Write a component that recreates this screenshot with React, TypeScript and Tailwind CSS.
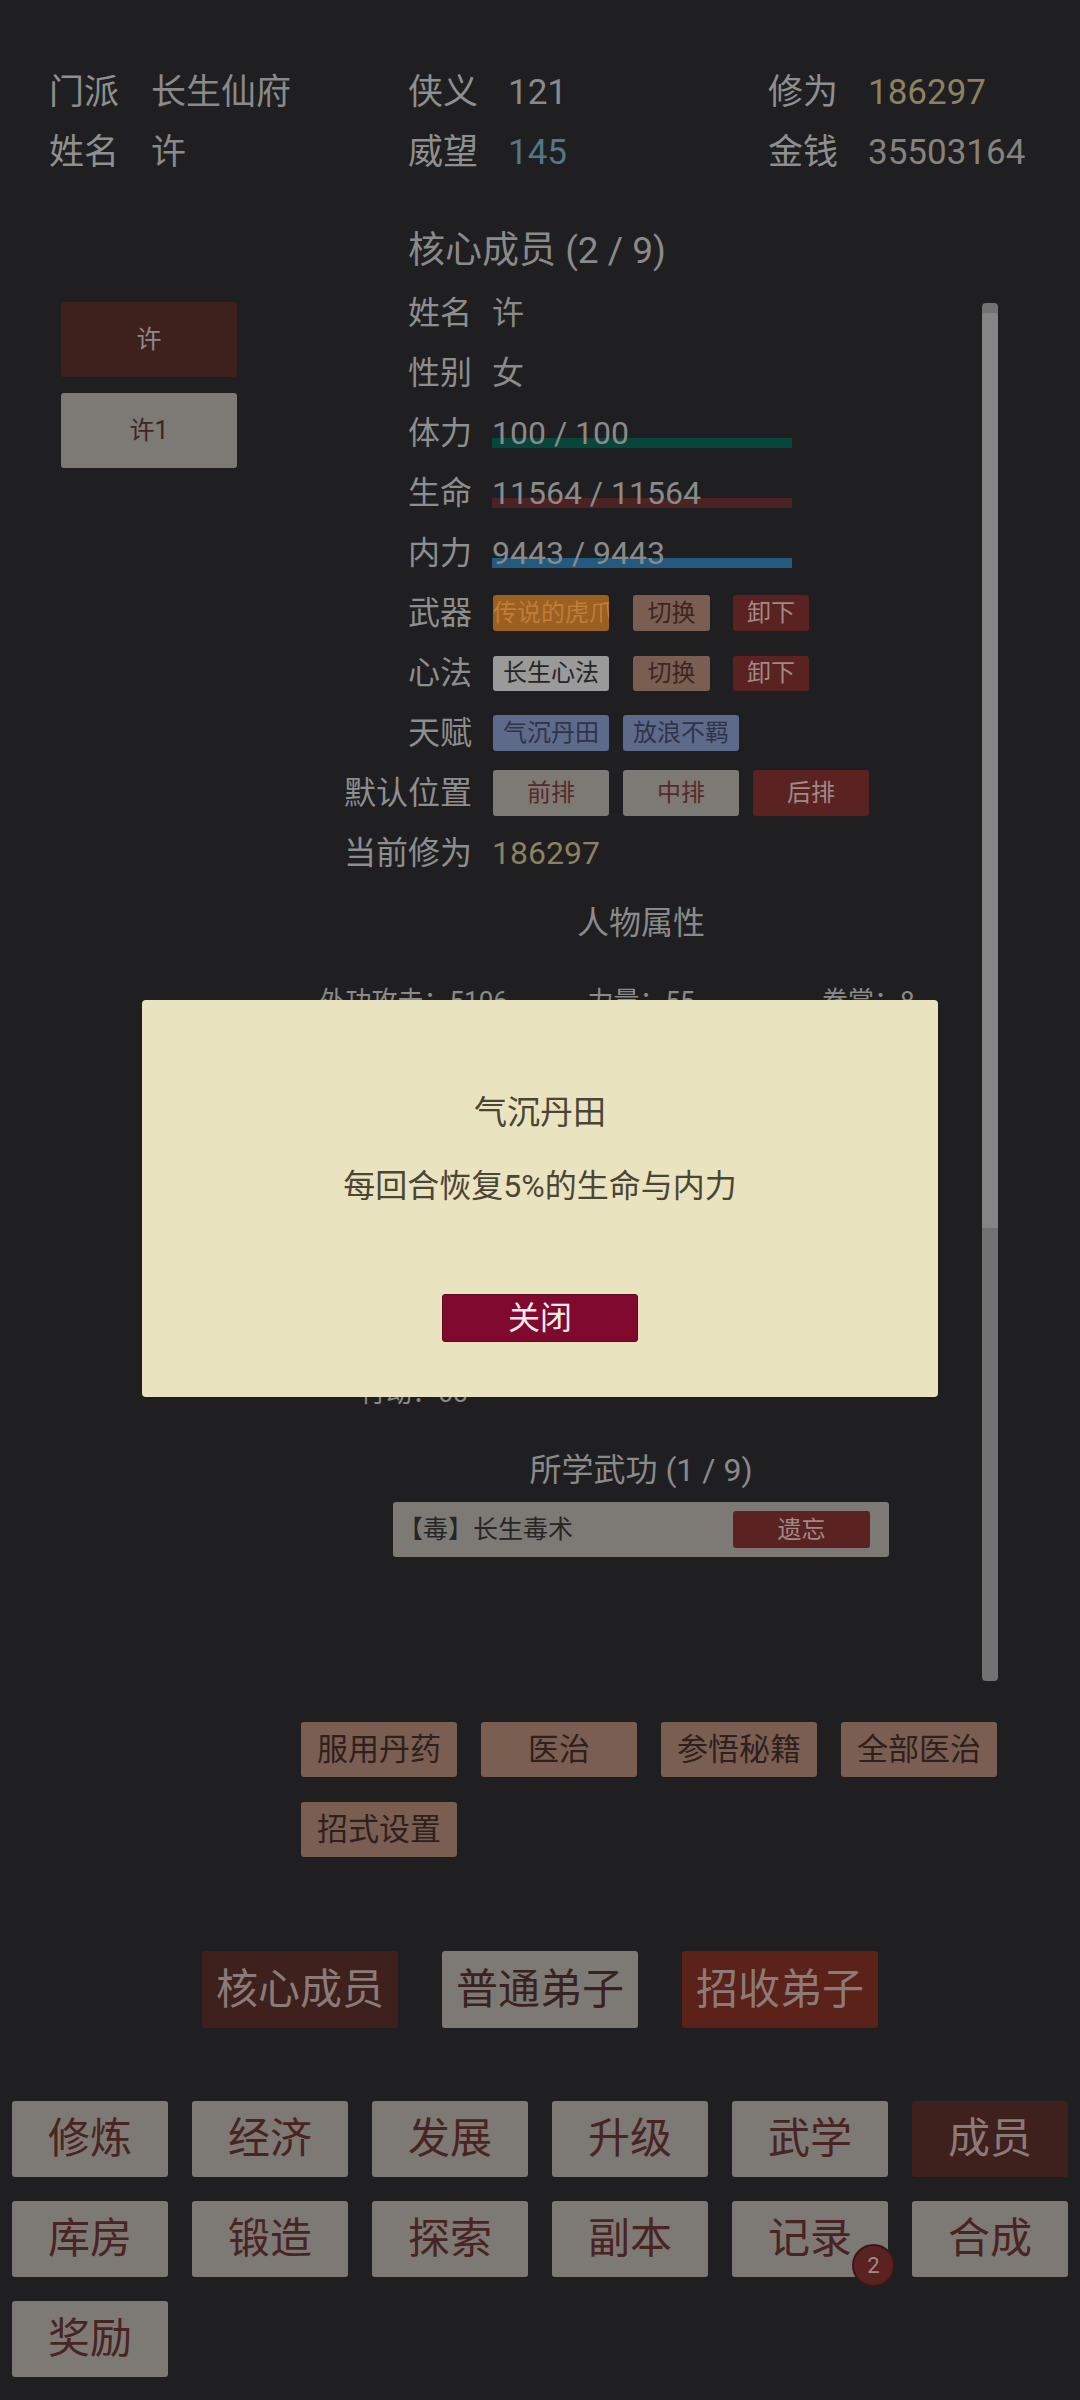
import React from "react";

const stats = [
  "外功攻击：5106", "力量：55", "拳掌：8",
  "内功攻击：4820", "根骨：62", "剑法：0",
  "外功防御：3210", "身法：48", "刀法：0",
  "内功防御：2987", "悟性：71", "棍法：0",
  "命中：120", "福缘：33", "暗器：0",
  "闪避：86", "医术：12", "毒术：45",
  "暴击：15", "御毒：30", "奇门：0",
  "暴伤：150", "格挡：20", "反击：10",
  "行动：65",
];

const navItems = ["修炼", "经济", "发展", "升级", "武学", "成员", "库房", "锻造", "探索", "副本", "记录", "合成", "奖励"];

// one line of the member detail panel
function Row({ label, children }: { label: string; children: React.ReactNode }) {
  return (
    <div className="flex h-[60px] items-center">
      <div className="w-[172px] text-right text-[32px] text-[#8e8e8e]">{label}</div>
      <div className="ml-[20px] flex items-center">{children}</div>
    </div>
  );
}

function Bar({ text, color }: { text: string; color: string }) {
  return (
    <div className="relative flex h-[60px] w-[300px] items-center">
      <div className={"absolute left-0 top-[35px] h-[10px] w-full " + color}></div>
      <span className="relative text-[32px] text-[#8a8a8a]">{text}</span>
    </div>
  );
}

function App() {
  return (
    <div className="relative min-h-[2400px] w-[1080px] overflow-hidden bg-[#1f1f21] font-['Roboto','Noto_Sans_CJK_SC',sans-serif] leading-none">
      {/* sect info */}
      <div className="grid grid-cols-[359px_360px_1fr] gap-y-[25px] pl-[49px] pt-[75px] text-[35px] text-[#8f8f8f]">
        <div className="flex h-[35px] items-center gap-[32px]"><span>门派</span><span className="text-[#8a8a8a]">长生仙府</span></div>
        <div className="flex h-[35px] items-center gap-[30px]"><span>侠义</span><span className="text-[#8a8a8a]">121</span></div>
        <div className="flex h-[35px] items-center gap-[30px]"><span>修为</span><span className="text-[#8d8160]">186297</span></div>
        <div className="flex h-[35px] items-center gap-[32px]"><span>姓名</span><span className="text-[#8a8a8a]">许</span></div>
        <div className="flex h-[35px] items-center gap-[30px]"><span>威望</span><span className="text-[#50778a]">145</span></div>
        <div className="flex h-[35px] items-center gap-[30px]"><span>金钱</span><span className="text-[#86827c]">35503164</span></div>
      </div>

      <div className="mt-[55px] flex h-[50px] items-center pl-[408px] text-[37px] text-[#8a8a8a]">核心成员 (2 / 9)</div>

      <div className="mt-[8px] flex h-[1400px]">
        {/* member list */}
        <div className="flex w-[300px] flex-col gap-[16px] pl-[61px] pt-[19px]">
          <button className="flex h-[75px] w-[176px] items-center justify-center rounded-[3px] bg-[#3e201d] text-[25px] text-[#8a8a8a]">许</button>
          <button className="flex h-[75px] w-[176px] items-center justify-center rounded-[3px] bg-[#7d7a75] text-[25px] text-[#3f2422]">许1</button>
        </div>

        {/* detail panel */}
        <div className="flex w-[682px] flex-col">
          <Row label="姓名"><span className="text-[32px] text-[#8a8a8a]">许</span></Row>
          <Row label="性别"><span className="text-[32px] text-[#8a8a8a]">女</span></Row>
          <Row label="体力"><Bar text="100 / 100" color="bg-[#07463a]" /></Row>
          <Row label="生命"><Bar text="11564 / 11564" color="bg-[#4b2323]" /></Row>
          <Row label="内力"><Bar text="9443 / 9443" color="bg-[#235a80]" /></Row>
          <Row label="武器">
            <div className="ml-[1px] flex h-[36px] w-[116px] items-center overflow-hidden whitespace-nowrap rounded-[3px] bg-[#9b5f20] text-[24px] text-[#c07d3c]">传说的虎爪</div>
            <div className="ml-[24px] flex h-[36px] w-[77px] items-center justify-center rounded-[3px] bg-[#7a5e52] text-[24px] text-[#3d2622]">切换</div>
            <div className="ml-[23px] flex h-[36px] w-[76px] items-center justify-center rounded-[3px] bg-[#5a2220] text-[24px] text-[#a08a88]">卸下</div>
          </Row>
          <Row label="心法">
            <div className="ml-[1px] flex h-[35px] w-[116px] items-center justify-center rounded-[3px] bg-[#9a9a9a] text-[24px] text-[#262626]">长生心法</div>
            <div className="ml-[24px] flex h-[35px] w-[77px] items-center justify-center rounded-[3px] bg-[#7a5e52] text-[24px] text-[#3d2622]">切换</div>
            <div className="ml-[23px] flex h-[35px] w-[76px] items-center justify-center rounded-[3px] bg-[#5a2220] text-[24px] text-[#a08a88]">卸下</div>
          </Row>
          <Row label="天赋">
            <div className="ml-[1px] flex h-[36px] w-[116px] items-center justify-center rounded-[3px] bg-[#5e6a8a] text-[24px] text-[#2e3447]">气沉丹田</div>
            <div className="ml-[14px] flex h-[36px] w-[116px] items-center justify-center rounded-[3px] bg-[#5e6a8a] text-[24px] text-[#2e3447]">放浪不羁</div>
          </Row>
          <Row label="默认位置">
            <div className="ml-[1px] flex h-[46px] w-[116px] items-center justify-center rounded-[3px] bg-[#7d7a75] text-[24px] text-[#5a2a28]">前排</div>
            <div className="ml-[14px] flex h-[46px] w-[116px] items-center justify-center rounded-[3px] bg-[#7d7a75] text-[24px] text-[#5a2a28]">中排</div>
            <div className="ml-[14px] flex h-[46px] w-[116px] items-center justify-center rounded-[3px] bg-[#5a2220] text-[24px] text-[#a08a88]">后排</div>
          </Row>
          <Row label="当前修为"><span className="text-[32px] text-[#8d8160]">186297</span></Row>

          <div className="mt-[15px] flex h-[50px] items-center justify-center text-[32px] text-[#8a8a8a]">人物属性</div>

          <div className="mt-[28px] grid grid-cols-3 text-[26px] text-[#8a8a8a]">
            {stats.map((s) => (
              <div key={s} className="flex h-[49px] items-center justify-center">{s}</div>
            ))}
          </div>

          <div className="mt-[28px] flex h-[50px] items-center justify-center text-[32px] text-[#8a8a8a]">所学武功 (1 / 9)</div>

          <div className="mx-auto mt-[7px] flex h-[55px] w-[496px] items-center justify-between rounded-[3px] bg-[#7d7a75] pl-[5px] pr-[19px]">
            <span className="text-[25px] text-[#262626]">【毒】长生毒术</span>
            <div className="flex h-[37px] w-[137px] items-center justify-center rounded-[3px] bg-[#5a2220] text-[24px] text-[#a08a88]">遗忘</div>
          </div>
        </div>

        {/* scrollbar */}
        <div className="mt-[20px] flex h-[1378px] w-[16px] flex-col overflow-hidden rounded-[4px] bg-[#727272]">
          <div className="mt-[10px] h-[915px] w-full rounded-t-[3px] bg-[#858585]"></div>
        </div>
      </div>

      {/* actions */}
      <div className="mt-[39px] grid grid-cols-[repeat(4,156px)] gap-x-[24px] gap-y-[25px] pl-[301px]">
        {["服用丹药", "医治", "参悟秘籍", "全部医治", "招式设置"].map((t) => (
          <button key={t} className="flex h-[55px] items-center justify-center rounded-[3px] bg-[#7a5e52] text-[31px] text-[#2f1f1d]">{t}</button>
        ))}
      </div>

      {/* tabs */}
      <div className="mt-[94px] flex justify-center gap-[44px]">
        <button className="flex h-[77px] w-[196px] items-center justify-center rounded-[3px] bg-[#3e201d] text-[42px] text-[#8a7a78]">核心成员</button>
        <button className="flex h-[77px] w-[196px] items-center justify-center rounded-[3px] bg-[#7d7a75] text-[42px] text-[#3a2220]">普通弟子</button>
        <button className="flex h-[77px] w-[196px] items-center justify-center rounded-[3px] bg-[#5a2219] text-[42px] text-[#8a7a78]">招收弟子</button>
      </div>

      {/* bottom nav */}
      <div className="mt-[73px] grid grid-cols-6 gap-x-[24px] gap-y-[24px] px-[12px]">
        {navItems.map((t) => (
          <button
            key={t}
            className={
              "relative flex h-[76px] items-center justify-center rounded-[3px] text-[42px] " +
              (t === "成员" ? "bg-[#3e201d] text-[#8a7a78]" : "bg-[#7d7a75] text-[#4a2422]")
            }
          >
            {t}
            {t === "记录" && (
              <span className="absolute bottom-[-10px] right-[-7px] flex h-[43px] w-[43px] items-center justify-center rounded-full border-2 border-[#3a1816] bg-[#5a2220] text-[22px] text-[#a08a88]">2</span>
            )}
          </button>
        ))}
      </div>

      {/* talent popup */}
      <div className="absolute left-[142px] top-[1000px] flex h-[397px] w-[796px] flex-col items-center rounded-[4px] bg-[#e9e3c0]">
        <div className="mt-[87px] flex h-[50px] items-center text-[33px] text-[#4a4534]">气沉丹田</div>
        <div className="mt-[24px] flex h-[50px] items-center text-[32px] text-[#4a4534]">每回合恢复5%的生命与内力</div>
        <button className="mt-[83px] flex h-[48px] w-[196px] items-center justify-center rounded-[3px] border border-[#5c0820] bg-[#7f0a2e] text-[32px] text-[#f2eaea]">关闭</button>
      </div>
    </div>
  );
}

export default App;
